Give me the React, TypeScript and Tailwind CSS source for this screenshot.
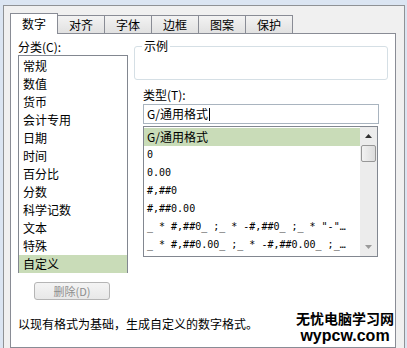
import React from 'react';

const categories = ['常规', '数值', '货币', '会计专用', '日期', '时间', '百分比', '分数', '科学记数', '文本', '特殊', '自定义'];
const formats = [
  'G/通用格式',
  '0',
  '0.00',
  '#,##0',
  '#,##0.00',
  '_ * #,##0_ ;_ * -#,##0_ ;_ * "-"…',
  '_ * #,##0.00_ ;_ * -#,##0.00_ ;_…',
];
const tabs = ['数字', '对齐', '字体', '边框', '图案', '保护'];

const cjk = "font-['Noto_Sans_CJK_SC',sans-serif]";
const mono = "font-['DejaVu_Sans_Mono','Noto_Sans_CJK_SC',monospace]";

export default function App() {
  return (
    <div className={`w-[407px] h-[348px] overflow-hidden bg-[#dbe5f2] pl-[3px] pt-[5px] pr-[2px] text-black ${cjk}`}>
      {/* dialog frame */}
      <div className="h-full border-l border-t border-r border-[#8f9295] bg-[#f0f0f0] pl-[6px] pt-[7px] pr-[8px] flex flex-col">
        {/* Tabs */}
        <div className="flex items-end h-[20px]">
          {tabs.map((t, i) =>
            i === 0 ? (
              <div
                key={t}
                className="relative z-10 w-[48px] h-[21px] -mb-px bg-white border border-b-0 border-[#898c95] text-[12px] leading-[18px] text-center pt-[1px]"
              >
                {t}
              </div>
            ) : (
              <div
                key={t}
                className="w-[48px] h-[18px] -ml-px bg-linear-to-b from-[#f3f3f3] to-[#e1e1e1] border border-b-0 border-[#898c95] text-[12px] leading-[17px] text-center"
              >
                {t}
              </div>
            )
          )}
        </div>

        {/* Panel */}
        <div className="relative flex-1 border border-[#898c95] bg-white pt-[4px] pl-[7px]">
          <div className="flex">
            {/* Left column */}
            <div className="w-[110px] flex flex-col">
              <div className="h-[17px] text-[12px] leading-[17px]">分类(C):</div>
              <div className="h-[218px] border border-[#828790] py-px">
                {categories.map((c, i) => (
                  <div
                    key={c}
                    className={`h-[18px] pl-[4px] text-[12px] leading-[18px] ${i === categories.length - 1 ? 'bg-[#c9dcb8]' : ''}`}
                  >
                    {c}
                  </div>
                ))}
              </div>
              <div className="mt-[9px] ml-[16px] w-[76px] h-[18px] rounded-[3px] border border-[#b5b5b5] bg-linear-to-b from-[#f4f4f4] to-[#e8e8e8] text-[11px] leading-[16px] text-center text-[#8d8d8d]">
                删除(D)
              </div>
            </div>

            {/* Right column */}
            <div className="ml-[6px] w-[254px] flex flex-col">
              <div className="relative mt-[8px] h-[34px] border border-[#d5dfe5] rounded-[3px]">
                <span className="absolute -top-[9px] left-[7px] bg-white px-[2px] text-[12px] leading-[16px]">示例</span>
              </div>
              <div className="pl-[9px]">
                <div className="mt-[6px] h-[18px] text-[12px] leading-[18px]">类型(T):</div>
                <div className="w-[236px] h-[20px] border border-[#a9b4bf] pl-[3px] flex items-center">
                  <span className="text-[12px] leading-[18px]">G/通用格式</span>
                  <span className="ml-px w-px h-[13px] bg-black" />
                </div>
                <div className="mt-[2px] w-[235px] h-[131px] border border-[#828790] flex">
                  <div className="flex-1 min-w-0 pt-px">
                    {formats.map((f, i) => (
                      <div
                        key={f}
                        className={`h-[18px] pl-[3px] leading-[18px] whitespace-nowrap ${i === 0 ? `bg-[#c9dcb8] text-[12px] ${cjk}` : `text-[10px] ${mono}`}`}
                      >
                        {f}
                      </div>
                    ))}
                  </div>
                  {/* scrollbar */}
                  <div className="w-[17px] bg-[#ececec] flex flex-col items-center">
                    <div className="h-[18px] w-full flex items-center justify-center">
                      <svg width="7" height="4" viewBox="0 0 7 4">
                        <path d="M0 4 L3.5 0 L7 4 Z" fill="#303030" />
                      </svg>
                    </div>
                    <div className="w-[15px] h-[17px] rounded-[2px] border border-[#979797] bg-linear-to-r from-[#f2f2f2] to-[#dcdcdc]" />
                    <div className="flex-1" />
                    <div className="h-[18px] w-full flex items-center justify-center">
                      <svg width="7" height="4" viewBox="0 0 7 4">
                        <path d="M0 0 L7 0 L3.5 4 Z" fill="#9a9a9a" />
                      </svg>
                    </div>
                  </div>
                </div>
              </div>
            </div>
          </div>

          <div className="mt-[16px] text-[12px] leading-[16px]">以现有格式为基础，生成自定义的数字格式。</div>

          {/* watermark */}
          <div className="absolute left-[285px] top-[277px] flex flex-col items-center gap-[2px] whitespace-nowrap">
            <span className="text-[14px] leading-[15px] font-bold">无忧电脑学习网</span>
            <span className="text-[16px] leading-[16px] font-bold font-['Liberation_Sans',sans-serif]">wypcw.com</span>
          </div>
        </div>
      </div>
    </div>
  );
}
